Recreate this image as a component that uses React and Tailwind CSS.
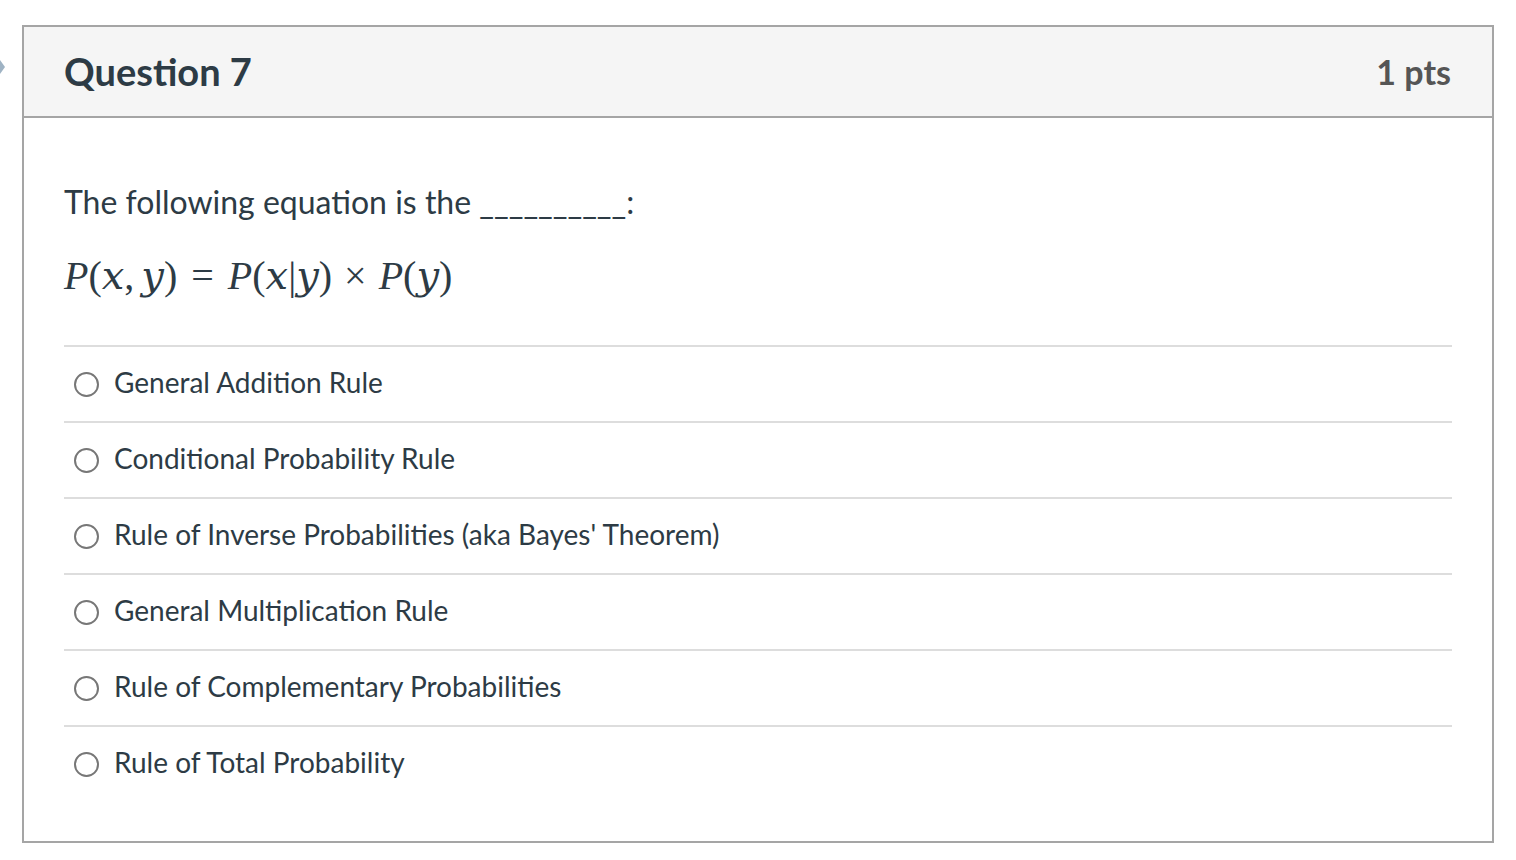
const OPTIONS = [
  "General Addition Rule",
  "Conditional Probability Rule",
  "Rule of Inverse Probabilities (aka Bayes' Theorem)",
  "General Multiplication Rule",
  "Rule of Complementary Probabilities",
  "Rule of Total Probability",
];

function Radio() {
  return (
    <span className="mt-[4px] inline-block h-[25px] w-[25px] shrink-0 rounded-full border-[2.5px] border-[#777777] bg-white" />
  );
}

// rough KaTeX look: italic variables, upright brackets and operators
function MathEq() {
  const tx = "font-['Liberation_Serif',serif]";
  const v = "italic font-['DejaVu_Serif',serif]";
  return (
    <div className={`flex items-baseline text-[40px] leading-none text-[#2d3b45] ${tx}`}>
      <span className="italic">P</span>
      <span>(</span>
      <span className={v}>x</span>
      <span>,</span>
      <span className={`${v} ml-[7px]`}>y</span>
      <span>)</span>
      <span className="mx-[14px]">=</span>
      <span className="italic">P</span>
      <span>(</span>
      <span className={v}>x</span>
      <span>|</span>
      <span className={v}>y</span>
      <span>)</span>
      <span className="mx-[12px]">×</span>
      <span className="italic">P</span>
      <span>(</span>
      <span className={v}>y</span>
      <span>)</span>
    </div>
  );
}

export default function App() {
  return (
    <div className="relative min-h-[860px] bg-white pl-[22px] pt-[25px] font-['Lato','Open_Sans',sans-serif]">
      <svg
        className="absolute left-0 top-[58px]"
        width="6"
        height="18"
        viewBox="0 0 6 18"
      >
        <path d="M0 2 L5 9 L0 16 Z" fill="#9fb3c4" />
      </svg>
      <section className="h-[818px] w-[1472px] border-2 border-[#a5a5a5] bg-white">
        <header className="flex h-[91px] items-center justify-between border-b-2 border-[#a5a5a5] bg-[#f5f5f5] pl-[40px] pr-[41px]">
          <h2 className="text-[38px] font-bold text-[#2d3b45]">Question 7</h2>
          <span className="text-[34px] font-bold text-[#555555]">1 pts</span>
        </header>
        <div className="px-[40px] pt-[59px]">
          <p className="text-[32px] leading-[50px] text-[#2d3b45]">
            The following equation is the __________:
          </p>
          <div className="mt-[24px] flex h-[48px] items-center">
            <MathEq />
          </div>
          <ul className="mt-[46px]">
            {OPTIONS.map((opt) => (
              <li
                key={opt}
                className="flex h-[76px] items-center gap-[15px] border-t-2 border-[#dddddd] pb-[4px] pl-[10px]"
              >
                <Radio />
                <span className="text-[28px] text-[#2d3b45]">{opt}</span>
              </li>
            ))}
          </ul>
        </div>
      </section>
    </div>
  );
}
